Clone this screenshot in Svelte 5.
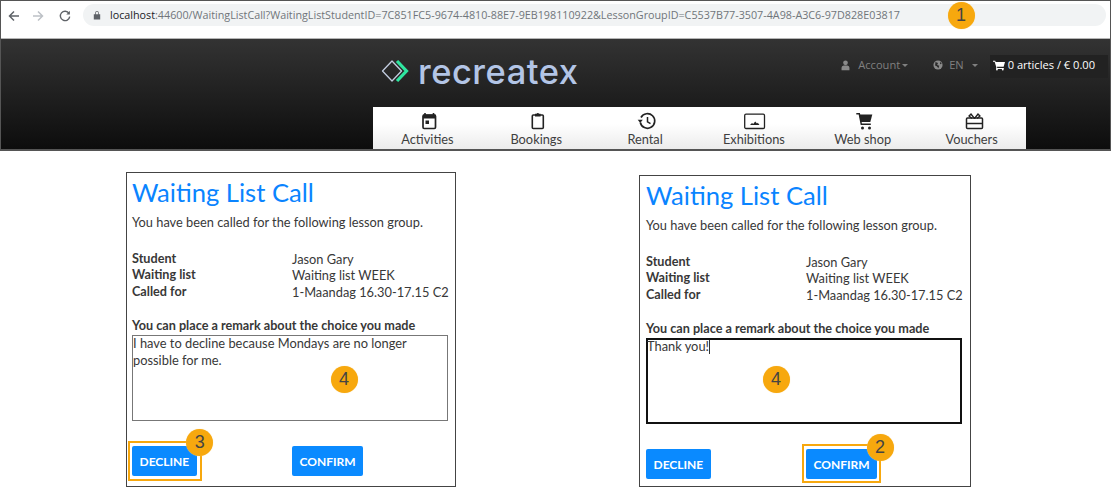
<script>
  const navItems = [
    { label: 'Activities', icon: 'calendar' },
    { label: 'Bookings', icon: 'clipboard' },
    { label: 'Rental', icon: 'history' },
    { label: 'Exhibitions', icon: 'image' },
    { label: 'Web shop', icon: 'cart' },
    { label: 'Vouchers', icon: 'gift' }
  ];

  const details = [
    ['Student', 'Jason Gary'],
    ['Waiting list', 'Waiting list WEEK'],
    ['Called for', '1-Maandag 16.30-17.15 C2']
  ];

  const url = 'WaitingListCall?WaitingListStudentID=7C851FC5-9674-4810-88E7-9EB198110922&LessonGroupID=C5537B77-3507-4A98-A3C6-97D828E03817';
</script>

{#snippet card(kind, remark, badge)}
  <section class="card {kind}">
    <h1>Waiting List Call</h1>
    <p class="intro">You have been called for the following lesson group.</p>
    <dl>
      {#each details as [term, value]}
        <dt>{term}</dt>
        <dd>{value}</dd>
      {/each}
    </dl>
    <div class="remark-label">You can place a remark about the choice you made</div>
    <div class="remark">
      {#each remark as line}<div class="remark-line">{line}</div>{/each}
      <span class="callout on-remark">4</span>
    </div>
    <div class="actions">
      <div class="action" class:picked={kind === 'declined'}>
        <button>DECLINE</button>
        {#if kind === 'declined'}<span class="callout on-action">{badge}</span>{/if}
      </div>
      <div class="action" class:picked={kind === 'confirmed'}>
        <button>CONFIRM</button>
        {#if kind === 'confirmed'}<span class="callout on-action">{badge}</span>{/if}
      </div>
    </div>
  </section>
{/snippet}

<div class="page">
  <div class="frame">
    <div class="chrome">
      <svg class="nav-arrow" viewBox="0 0 12 12"><path d="M11 6H2M6 1.5L1.5 6 6 10.5" fill="none" stroke="#5f6368" stroke-width="1.5"/></svg>
      <svg class="nav-arrow" viewBox="0 0 12 12"><path d="M1 6h9M6 1.5L10.5 6 6 10.5" fill="none" stroke="#bdc1c6" stroke-width="1.5"/></svg>
      <svg class="nav-arrow reload" viewBox="0 0 12 12"><path d="M10 3.4A4.7 4.7 0 1 0 10.7 6.6" fill="none" stroke="#5f6368" stroke-width="1.4"/><path d="M10.9 0.8V4.4H7.3z" fill="#5f6368"/></svg>
      <div class="omnibox">
        <svg class="lock" viewBox="0 0 10 12"><path d="M1 5h8v6.5H1zM2.7 5V3.4a2.3 2.3 0 0 1 4.6 0V5" fill="#5f6368"/><path d="M3.6 5V3.4a1.4 1.4 0 0 1 2.8 0V5z" fill="#f1f3f4"/></svg>
        <span class="host">localhost</span><span class="rest">:44600/{url}</span>
        <span class="callout on-url">1</span>
      </div>
    </div>

    <header class="site">
      <div class="site-top">
        <div class="logo">
          <svg viewBox="0 0 30 24" width="30" height="24">
            <path d="M11 2L1.500 12 11 22l9.500-10z" fill="none" stroke="#c3cde0" stroke-width="1.300" stroke-linejoin="round"/>
            <path d="M16 2l9.500 10L16 22" fill="none" stroke="#2fe6a0" stroke-width="3.200"/>
          </svg>
          <span>recreatex</span>
        </div>
        <div class="tools">
          <svg class="tool-icon" viewBox="0 0 10 12"><circle cx="5" cy="3" r="2.6" fill="#8a8a8a"/><path d="M0.6 11.4V8.500Q0.6 6.200 3 6h4q2.400.2 2.400 2.500v2.900z" fill="#8a8a8a"/></svg>
          <span class="tool account">Account<i class="caret"></i></span>
          <svg class="tool-icon globe" viewBox="0 0 12 12"><circle cx="6" cy="6" r="5.500" fill="#8a8a8a"/><path d="M3 2.500l3 1-1 2.500 2.500 1-1 3-2-2.500-2-1zM8.500 2l2 2.500-2 .5z" fill="#2a2a2a"/></svg>
          <span class="tool lang">EN<i class="caret"></i></span>
          <div class="basket">
            <svg viewBox="0 0 14 12" width="12" height="11"><path d="M0 .5h2.600l.5 1.500H14l-1.600 5.500H4.600L5 9h7.600v1H3.600l.3-2L1.900 1.500H0z" fill="#fff"/><circle cx="4.600" cy="10.800" r="1.100" fill="#fff"/><circle cx="11.400" cy="10.800" r="1.100" fill="#fff"/></svg>
            <span>0 articles / € 0.00</span>
          </div>
        </div>
      </div>
      <nav>
        {#each navItems as item}
          <div class="nav-item">
            <svg viewBox="0 0 22 20" width="22" height="20">
              {#if item.icon === 'calendar'}
                <path d="M9 2v3M17.500 2v3" stroke="#222" stroke-width="1.600"/>
                <rect x="7" y="4" width="12.500" height="13.500" rx="1.200" fill="none" stroke="#222" stroke-width="1.700"/>
                <rect x="7" y="3.500" width="12.500" height="4" fill="#222"/>
                <rect x="9.500" y="9.500" width="3.500" height="3.500" fill="#222"/>
              {:else if item.icon === 'clipboard'}
                <rect x="7.300" y="4" width="11" height="13.500" rx="1" fill="none" stroke="#222" stroke-width="1.600"/>
                <path d="M10 2.800h1.500a1.400 1.400 0 0 1 2.600 0h1.500v2.700H10z" fill="#222"/>
              {:else if item.icon === 'history'}
                <path d="M7 6.500A7.300 7.300 0 1 1 6.300 11.500" fill="none" stroke="#222" stroke-width="1.700"/>
                <path d="M3.700 8.700h5.100L6.200 12z" fill="#222"/>
                <path d="M13.500 6v4.800l3 1.800" fill="none" stroke="#222" stroke-width="1.500"/>
              {:else if item.icon === 'image'}
                <rect x="1.700" y="3.200" width="19.800" height="14.300" rx="1.300" fill="none" stroke="#222" stroke-width="1.300"/>
                <path d="M7 14l2-2 1.200 1 2-2.500 1.800 2 .8-.7 1.700 2.200z" fill="#222"/>
              {:else if item.icon === 'cart'}
                <path d="M4.300 2.800h3l2 10.500h9.500" fill="none" stroke="#222" stroke-width="1.500"/>
                <path d="M7 3.500H20.300l-2 7.500H9z" fill="#222"/>
                <circle cx="10.500" cy="17" r="1.500" fill="#222"/>
                <circle cx="17.500" cy="17" r="1.500" fill="#222"/>
              {:else}
                <rect x="5.500" y="7" width="16" height="10.500" rx="1" fill="none" stroke="#222" stroke-width="1.500"/>
                <path d="M5.500 12.500h16" stroke="#222" stroke-width="1.500"/>
                <path d="M13.500 7.500L10 3 8 5l3 2.500M13.500 7.500L17 3l2 2-3 2.500" fill="none" stroke="#222" stroke-width="1.300"/>
              {/if}
            </svg>
            <span>{item.label}</span>
          </div>
        {/each}
      </nav>
    </header>
  </div>

  <div class="cards">
    {@render card('declined', ['I have to decline because Mondays are no longer', 'possible for me.'], 3)}
    {@render card('confirmed', ['Thank you!'], 2)}
  </div>
</div>

<style>
  :global(body) { background: #fff; }
  .page { width: 1111px; height: 487px; overflow: hidden; font-family: Lato, sans-serif; color: #383838; }

  .frame { width: 1111px; height: 151px; box-sizing: border-box; border: 1px solid #555; border-width: 1px 1px 2px 1px; }
  .chrome { height: 38px; display: flex; align-items: flex-start; padding: 3px 4px 0 7px; box-sizing: border-box; background: #fff; border-bottom: 1px solid #b5b5b5; }
  .nav-arrow { width: 12px; height: 12px; margin-top: 6px; margin-right: 12px; flex: none; }
  .reload { margin-left: 3px; margin-right: 9px; }
  .omnibox { position: relative; margin-left: 3px; flex: 1; height: 22px; background: #f1f3f4; border-radius: 11px; display: flex; align-items: center; padding-left: 10px; font: 10.750px "Open Sans", sans-serif; color: #70757a; white-space: nowrap; }
  .lock { width: 8px; height: 10px; margin-right: 9px; }
  .host { color: #202124; }

  .site { height: 110px; background: linear-gradient(#333, #0d0d0d); display: flex; flex-direction: column; }
  .site-top { flex: 1; display: flex; }
  .logo { margin-left: 380px; margin-top: 14px; display: flex; align-items: center; height: 36px; gap: 7px; color: #b3c5e6; font: 500 34.500px Inter, sans-serif; letter-spacing: 0.5px; }
  .tools { margin-left: auto; margin-right: 2px; margin-top: 16px; height: 23px; display: flex; align-items: flex-start; color: #808080; font: 11.100px "Open Sans", sans-serif; }
  .tool-icon { width: 9px; height: 11px; margin-top: 5px; margin-right: 8px; }
  .tool-icon.globe { width: 10px; height: 10px; margin-right: 6px; }
  .tool { line-height: 20px; }
  .account { margin-right: 25px; }
  .lang { margin-right: 12px; }
  .caret { display: inline-block; border: 3.500px solid transparent; border-top-color: #808080; border-bottom: 0; margin-left: 2px; vertical-align: 2px; }
  .lang .caret { margin-left: 8px; }
  .basket { height: 23px; background: #222; padding: 0 13px 0 3px; display: flex; align-items: flex-start; gap: 3px; color: #fff; line-height: 20px; }
  .basket svg { margin-top: 5px; }

  nav { width: 653px; height: 42px; margin-left: 372px; background: linear-gradient(#fff 40%, #ececec); display: flex; }
  .nav-item { flex: 1; display: flex; flex-direction: column; align-items: center; color: #3f3f3f; font-size: 12.800px; line-height: 16px; padding-top: 4px; }
  .nav-item svg { overflow: visible; flex: none; }

  .cards { position: relative; display: flex; padding-left: 126px; gap: 183px; margin-top: 21px; }
  .card { width: 330px; height: 315px; box-sizing: border-box; border: 1px solid #444; padding: 0 7px 0 5px; font-size: 12.850px; line-height: 16.500px; display: flex; flex-direction: column; background: #fff; }
  .card.confirmed { width: 332px; height: 312px; margin-top: 3px; padding: 0 8px 0 6px; }
  h1 { margin: 1px 0 0; font-size: 25.600px; font-weight: 400; line-height: 36px; color: #0a84ff; }
  .intro { margin: 4px 0 0; font-size: 12.800px; }
  dl { margin: 20px 0 0; display: grid; grid-template-columns: 160px 1fr; }
  dt { font-weight: 700; font-size: 12.650px; }
  dd { margin: 0; white-space: nowrap; font-size: 12.800px; }
  .remark-label { font-weight: 700; font-size: 12.650px; margin-top: 18px; }
  .remark { position: relative; flex: none; height: 86px; box-sizing: border-box; border: 1px solid #777; margin-top: 0.500px; }
  .remark-line { position: relative; top: -1px; }
  .confirmed .remark { border: 2px solid #111; }
  .confirmed .remark-line { left: -1px; top: -2px; }
  .confirmed .remark-line::after { content: ''; display: inline-block; width: 1px; height: 14px; background: #333; vertical-align: -3px; }
  .actions { display: grid; grid-template-columns: 160px 1fr; margin-top: 25px; }
  .action { position: relative; justify-self: start; }
  .action.picked::before { content: ''; position: absolute; inset: -5px -4px -4px -4px; border: 2px solid #f7a80e; pointer-events: none; }
  .declined .action.picked::before { inset: -5px -5px -5px -4px; }
  button { display: block; height: 30px; border: 0; border-radius: 2px; background: #0a8aff; color: #fff; font: 700 12px Lato, sans-serif; padding: 0 7.500px; }

  .callout { position: absolute; width: 27px; height: 27px; border-radius: 50%; background: #f7a80e; color: #444; font: 18px/27px "Liberation Sans", sans-serif; text-align: center; box-shadow: 0 0 1px #f6d68f; }
  .on-url { left: 864.500px; top: -2.500px; }
  .on-remark { left: 197.500px; top: 29.500px; }
  .confirmed .on-remark { left: 114.500px; top: 25.500px; }
  .on-action { right: -16.500px; top: -17.500px; }
  .confirmed .on-action { top: -15.500px; }
</style>
